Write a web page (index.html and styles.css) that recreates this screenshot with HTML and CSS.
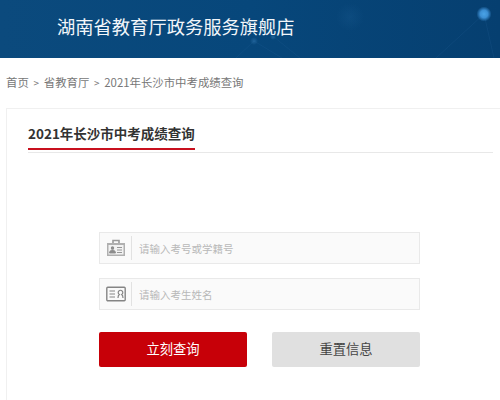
FILE: index.html
```html
<!DOCTYPE html>
<html lang="zh-CN">
<head>
<meta charset="utf-8">
<title>2021年长沙市中考成绩查询</title>
<link rel="stylesheet" href="styles.css">
</head>
<body>
<header class="banner">
  <svg class="banner-art" viewBox="0 0 500 58" aria-hidden="true">
    <defs>
      <radialGradient id="glow"><stop offset="0" stop-color="#4aa3e6"/><stop offset=".5" stop-color="#3c8fd4"/><stop offset="1" stop-color="#3c8fd4" stop-opacity="0"/></radialGradient>
      <radialGradient id="glow2"><stop offset="0" stop-color="#2f74ad" stop-opacity=".6"/><stop offset="1" stop-color="#2f74ad" stop-opacity="0"/></radialGradient>
    </defs>
    <g stroke="#2a6a9f" stroke-opacity=".18" fill="none">
      <path d="M484 14 L436 58 M484 14 L494 58 M254 41 L236 58 M254 41 L282 58 M274 37 L300 58"/>
    </g>
    <circle cx="484" cy="14" r="7.500" fill="url(#glow)"/>
    <circle cx="254" cy="41" r="4" fill="url(#glow2)"/>
    <circle cx="273" cy="37" r="3" fill="url(#glow2)"/>
    <circle cx="350" cy="17" r="14" fill="url(#glow2)" opacity=".25"/>
  </svg>
  <h1 class="banner-title">湖南省教育厅政务服务旗舰店</h1>
</header>
<nav class="crumbs">
  <a>首页</a><span class="sep">&gt;</span><a>省教育厅</a><span class="sep">&gt;</span><a>2021年长沙市中考成绩查询</a>
</nav>
<main class="card">
  <div class="card-head"><h2 class="card-title">2021年长沙市中考成绩查询</h2></div>
  <form class="form">
    <label class="field">
      <span class="field-icon">
        <svg width="20" height="18" viewBox="0 0 20 18" aria-hidden="true">
          <path d="M7 4V1.500h6V4" fill="none" stroke="#9a9a9a" stroke-width="1.600"/>
          <path d="M1 4h18v13H1z" fill="#b0b0b0"/>
          <path d="M2.500 6h15v9.500h-15z" fill="#f2f2f2"/>
          <circle cx="6.500" cy="9" r="1.700" fill="#8c8c8c"/>
          <path d="M3.500 14c.3-2.200 1.500-3 3-3s2.700.8 3 3zM11 8.500h5M11 11h5M11 13.500h5" fill="#8c8c8c" stroke="#8c8c8c" stroke-width=".9"/>
        </svg>
      </span>
      <input class="field-input" type="text" placeholder="请输入考号或学籍号">
    </label>
    <label class="field">
      <span class="field-icon">
        <svg width="20" height="16" viewBox="0 0 20 16" aria-hidden="true">
          <rect x=".8" y="1.300" width="18.400" height="13.400" rx="1" fill="none" stroke="#858585" stroke-width="1.400"/>
          <path d="M3.500 5h5.500M3.500 8h5.500M3.500 11h5.500" stroke="#858585" stroke-width="1.200"/>
          <path d="M12 12c0-2 .6-3 1.300-3.500a2.300 2.300 0 1 1 2.400 0C16.400 9 17 10 17 12" fill="none" stroke="#858585" stroke-width="1.200"/>
        </svg>
      </span>
      <input class="field-input" type="text" placeholder="请输入考生姓名">
    </label>
    <div class="actions">
      <button class="btn btn-primary" type="button">立刻查询</button>
      <button class="btn btn-muted" type="button">重置信息</button>
    </div>
  </form>
</main>
</body>
</html>
```
FILE: styles.css
```css
* { box-sizing: border-box; }
html, body { margin: 0; padding: 0; }
body {
  width: 500px;
  height: 400px;
  overflow: hidden;
  background: #fff;
  font-family: "Noto Sans CJK SC", "Open Sans", sans-serif;
}
.banner {
  position: relative;
  height: 58px;
  background: linear-gradient(90deg, #0b4a7d 0%, #07477b 50%, #063f70 100%);
  padding-left: 57px;
  display: flex;
  align-items: center;
}
.banner-art { position: absolute; inset: 0; width: 500px; height: 58px; }
.banner-title {
  position: relative;
  margin: 0 0 6px;
  font-size: 18.300px;
  font-weight: 400;
  color: #f2f6fa;
  line-height: 26px;
}
.crumbs {
  display: flex;
  align-items: center;
  height: 50px;
  padding: 0 0 2px 6px;
  font-size: 11.400px;
  color: #777;
}
.sep { margin: 0 4.700px; font-size: 10px; }
.card {
  margin-left: 6px;
  width: 494px;
  height: 292px;
  border: 1px solid #f0f0f0;
  border-width: 1px 0 0 1px;
  padding: 0 0 0 21px;
}
.card-head {
  width: 465px;
  height: 44px;
  border-bottom: 1px solid #e8e8e8;
}
.card-title {
  display: inline-block;
  margin: 0;
  height: 41px;
  padding-top: 13px;
  font-size: 13.500px;
  line-height: 22px;
  font-weight: 700;
  color: #333;
  border-bottom: 2px solid #c8101e;
}
.form {
  width: 321px;
  margin: 79px 0 0 71px;
}
.field {
  display: flex;
  align-items: center;
  height: 32px;
  margin-bottom: 14px;
  background: #fafafa;
  border: 1px solid #e9e9e9;
}
.field-icon {
  flex: none;
  width: 32px;
  height: 24px;
  display: flex;
  align-items: center;
  justify-content: center;
  border-right: 1px solid #e2e2e2;
}
.field-input {
  flex: 1;
  min-width: 0;
  border: 0;
  outline: 0;
  background: transparent;
  padding: 0 0 0 7px;
  font: 10.500px "Noto Sans CJK SC", sans-serif;
  color: #555;
}
.field-input::placeholder { color: #b8b8b8; opacity: 1; }
.actions {
  display: flex;
  justify-content: space-between;
  margin-top: 22px;
}
.btn {
  width: 148px;
  height: 35px;
  border: 0;
  border-radius: 2px;
  padding: 0 0 2px;
  font: 13.300px "Noto Sans CJK SC", sans-serif;
}
.btn-primary { background: #c70008; color: #fff; }
.btn-muted { background: #e0e0e0; color: #444; }
```
